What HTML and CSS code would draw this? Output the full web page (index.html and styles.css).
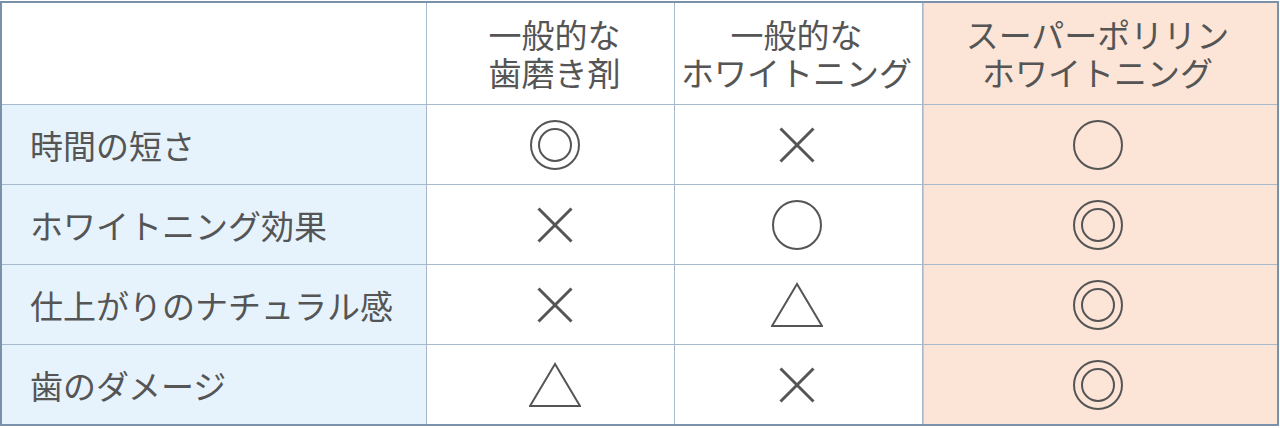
FILE: index.html
```html
<!DOCTYPE html>
<html lang="ja">
<head>
<meta charset="utf-8">
<title>比較表</title>
<link rel="stylesheet" href="styles.css">
</head>
<body>
<div class="table">
  <div class="cell head blank"></div>
  <div class="cell head c2">一般的な<br>歯磨き剤</div>
  <div class="cell head c3">一般的な<br>ホワイトニング</div>
  <div class="cell head c4 hl">スーパーポリリン<br>ホワイトニング</div>

  <div class="cell label">時間の短さ</div>
  <div class="cell mark c2"><svg class="sym" viewBox="0 0 52 52"><circle cx="26" cy="26" r="24" /><circle cx="26" cy="26" r="16" /></svg></div>
  <div class="cell mark c3"><svg class="sym" viewBox="0 0 52 52"><path class="x" d="M9.5 9.5 L42.5 42.5 M42.5 9.5 L9.5 42.5" /></svg></div>
  <div class="cell mark c4 hl"><svg class="sym" viewBox="0 0 52 52"><circle cx="26" cy="26" r="24" /></svg></div>

  <div class="cell label">ホワイトニング効果</div>
  <div class="cell mark c2"><svg class="sym" viewBox="0 0 52 52"><path class="x" d="M9.5 9.5 L42.5 42.5 M42.5 9.5 L9.5 42.5" /></svg></div>
  <div class="cell mark c3"><svg class="sym" viewBox="0 0 52 52"><circle cx="26" cy="26" r="24" /></svg></div>
  <div class="cell mark c4 hl"><svg class="sym" viewBox="0 0 52 52"><circle cx="26" cy="26" r="24" /><circle cx="26" cy="26" r="16" /></svg></div>

  <div class="cell label">仕上がりのナチュラル感</div>
  <div class="cell mark c2"><svg class="sym" viewBox="0 0 52 52"><path class="x" d="M9.5 9.5 L42.5 42.5 M42.5 9.5 L9.5 42.5" /></svg></div>
  <div class="cell mark c3"><svg class="sym" viewBox="0 0 52 52"><polygon points="26,5 1,47 51,47" /></svg></div>
  <div class="cell mark c4 hl"><svg class="sym" viewBox="0 0 52 52"><circle cx="26" cy="26" r="24" /><circle cx="26" cy="26" r="16" /></svg></div>

  <div class="cell label">歯のダメージ</div>
  <div class="cell mark c2"><svg class="sym" viewBox="0 0 52 52"><polygon points="26,5 1,47 51,47" /></svg></div>
  <div class="cell mark c3"><svg class="sym" viewBox="0 0 52 52"><path class="x" d="M9.5 9.5 L42.5 42.5 M42.5 9.5 L9.5 42.5" /></svg></div>
  <div class="cell mark c4 hl"><svg class="sym" viewBox="0 0 52 52"><circle cx="26" cy="26" r="24" /><circle cx="26" cy="26" r="16" /></svg></div>
</div>
</body>
</html>
```

FILE: styles.css
```css
html, body {
  margin: 0;
  padding: 0;
  background: #ffffff;
}

body {
  padding-top: 1px;
  font-family: "Noto Sans CJK JP", "Noto Sans", sans-serif;
  color: #555555;
}

.table {
  width: 1275px;
  display: grid;
  grid-template-columns: 424px 247px 247px 1fr;
  grid-template-rows: 101px 79px 79px 79px 79px;
  gap: 1px;
  background: #a7b9cc;
  border: 2px solid #7a91aa;
}

.cell {
  background: #ffffff;
  display: flex;
  align-items: center;
}

.head {
  justify-content: center;
  text-align: center;
  font-size: 33px;
  line-height: 38px;
  padding-bottom: 2px;
}

.label {
  background: #e6f3fc;
  font-size: 33px;
  line-height: 40px;
  padding-left: 28px;
}

.mark {
  justify-content: center;
}

.c2 {
  padding-left: 8px;
}

.c3 {
  padding-right: 4px;
}

.c4 {
  padding-right: 5px;
}

.hl {
  background: #fce5d7;
  box-shadow: inset 1px 0 0 #c9c9cc;
}

.sym {
  width: 52px;
  height: 52px;
  display: block;
}

.sym circle,
.sym polygon {
  fill: none;
  stroke: #555555;
  stroke-width: 2;
}

.sym .x {
  fill: none;
  stroke: #555555;
  stroke-width: 3;
}
```
